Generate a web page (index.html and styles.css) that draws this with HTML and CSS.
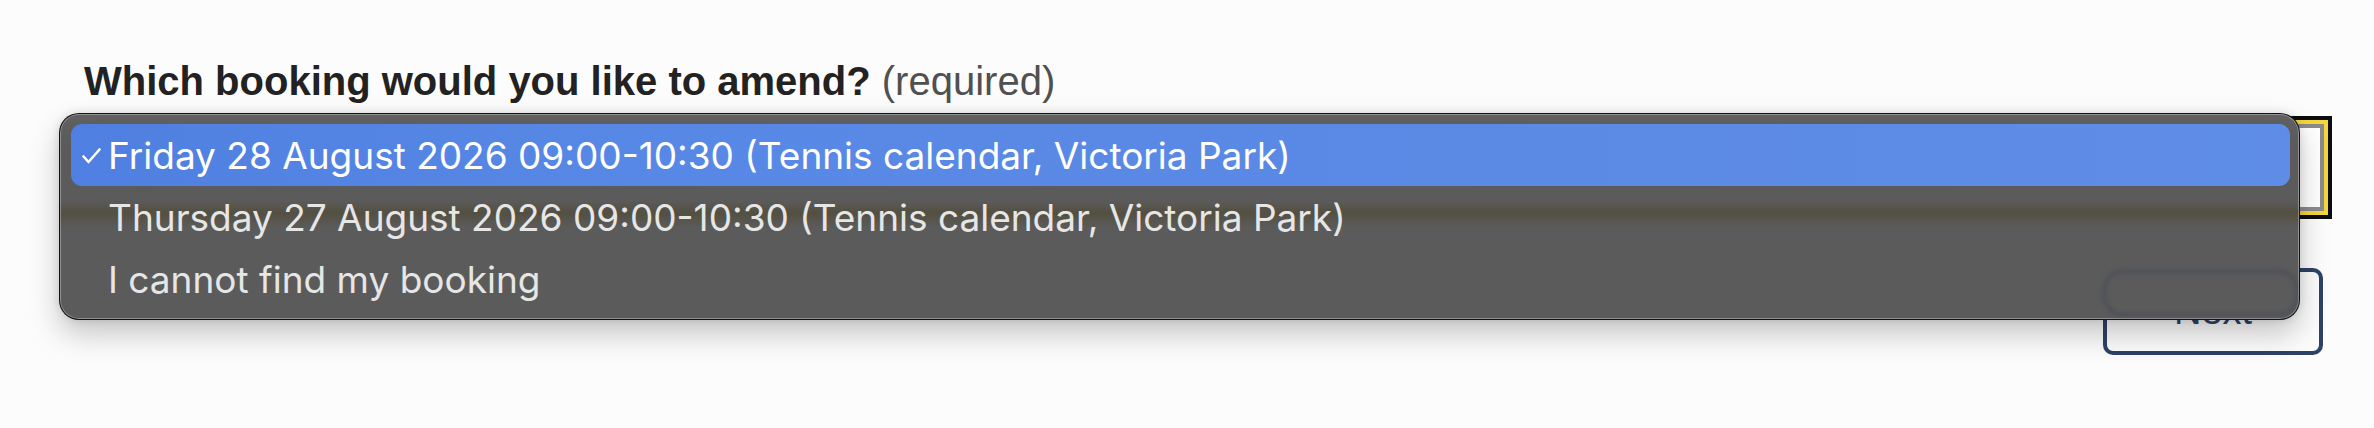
FILE: index.html
```html
<!DOCTYPE html>
<html lang="en">
<head>
<meta charset="utf-8">
<title>Amend booking</title>
<link rel="stylesheet" href="styles.css">
</head>
<body>
<main class="page">
  <div class="field">
    <label class="label" for="booking"><span class="label-main">Which booking would you like to amend?</span> <span class="hint">(required)</span></label>
    <div class="select" id="booking"></div>
  </div>
  <div class="actions">
    <button class="btn" type="button">Next</button>
  </div>
</main>

<div class="popup" role="listbox">
  <div class="ghost"></div>
  <div class="option option--selected">
    <svg class="check" width="19" height="16" viewBox="0 0 19 16"><path d="M1.5 8.5 L6.5 14 L17.5 1.5" fill="none" stroke="#fff" stroke-width="2.6" stroke-linecap="round" stroke-linejoin="round"/></svg>
    <span>Friday 28 August 2026 09:00-10:30 (Tennis calendar, Victoria Park)</span>
  </div>
  <div class="option"><span>Thursday 27 August 2026 09:00-10:30 (Tennis calendar, Victoria Park)</span></div>
  <div class="option"><span>I cannot find my booking</span></div>
</div>
</body>
</html>
```

FILE: styles.css
```css
html, body {
  margin: 0;
  padding: 0;
}

body {
  background: #fcfcfc;
  width: 2374px;
  height: 428px;
  overflow: hidden;
  position: relative;
}

.page {
  padding: 56px 50px 0 84px;
  font-family: "Liberation Sans", Arial, sans-serif;
}

.label {
  display: block;
  font-size: 40px;
  line-height: 50px;
  margin-bottom: 18px;
  color: #222;
}

.label-main {
  font-weight: 700;
}

.hint {
  color: #505050;
  font-weight: 400;
}

.select {
  box-sizing: border-box;
  height: 87px;
  border: 4px solid #8b8b8b;
  background: #fff;
  outline: 4px solid #f7d63b;
  box-shadow: 0 0 0 8px #0b0c0c;
}

.actions {
  display: flex;
  justify-content: flex-end;
  margin-top: 57px;
  padding-right: 1px;
}

.btn {
  box-sizing: border-box;
  width: 220px;
  height: 87px;
  border: 4px solid #2e4265;
  border-radius: 10px;
  background: transparent;
  color: #2e4265;
  font-family: "Liberation Sans", Arial, sans-serif;
  font-size: 38px;
  padding: 0;
}

.popup {
  position: absolute;
  left: 59px;
  top: 113px;
  width: 2241px;
  height: 207px;
  box-sizing: border-box;
  padding: 10px 9px 9px 11px;
  border: 1px solid rgba(0, 0, 0, 0.8);
  border-radius: 20px;
  background:
    linear-gradient(to bottom, rgba(255,255,255,0.03) 0, rgba(255,255,255,0) 30px),
    linear-gradient(to bottom, rgba(80,74,45,0) 86px, rgba(78,72,48,0.6) 99px, rgba(80,74,45,0) 114px),
    #5b5b5b;
  box-shadow:
    inset 0 0 0 1px rgba(255, 255, 255, 0.32),
    0 14px 30px rgba(0, 0, 0, 0.22),
    0 0 8px rgba(0, 0, 0, 0.12);
  font-family: Inter, "Noto Sans", sans-serif;
  font-size: 37px;
  overflow: hidden;
}

.ghost {
  position: absolute;
  left: 2043px;
  top: 156px;
  width: 190px;
  height: 40px;
  border: 3px solid rgba(40, 55, 85, 0.35);
  border-radius: 20px;
  filter: blur(2px);
}

.option {
  position: relative;
  height: 62px;
  line-height: 64px;
  padding-left: 37px;
  color: #e6e6e6;
  border-radius: 11px;
  white-space: nowrap;
}

.option--selected {
  color: #fff;
  background: linear-gradient(90deg, #4f80e1 0, #5888e5 25%, #5e8ce6 100%);
}

.check {
  position: absolute;
  left: 11px;
  top: 24px;
}
```
